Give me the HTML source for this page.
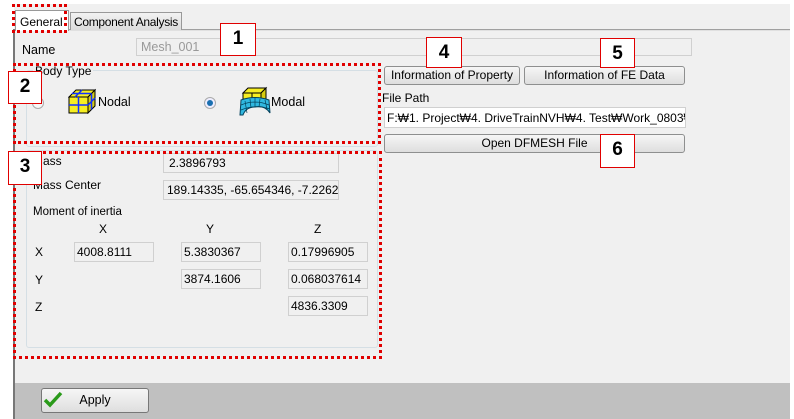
<!DOCTYPE html>
<html><head><meta charset="utf-8"><style>
*{margin:0;padding:0;box-sizing:border-box}
body{width:794px;height:419px;position:relative;overflow:hidden;background:#fff;font-family:"Liberation Sans",sans-serif;font-size:11.5px;color:#000}
.a{position:absolute}
.tb{position:absolute;border:1px solid #d0d0d0;background:#f0f0f0;padding:2px 5px;font-size:11.5px;white-space:nowrap;overflow:hidden}
.btn{position:absolute;border:1px solid #8e8f8f;border-radius:3px;background:linear-gradient(#f6f6f6,#dedede);text-align:center;font-size:12px;line-height:16px;white-space:nowrap}
.rd{position:absolute;border:3px dotted #e00000}
.num{position:absolute;background:#fff;border:1px solid #e00000;font-size:19px;font-weight:bold;text-align:center;line-height:30px}
.gb{position:absolute;border:1px solid #d5dfe5;border-radius:3px}
</style></head><body>
<div class="a" style="left:14px;top:4px;width:776px;height:415px;background:#f0f0f0"></div>
<div class="a" style="left:13px;top:29px;width:2px;height:390px;background:#777"></div>
<div class="a" style="left:15px;top:29px;width:775px;height:1px;background:#a0a0a0"></div>
<div class="a" style="left:15px;top:30px;width:775px;height:1px;background:#e0e0e0"></div>
<!-- tabs -->
<div class="a" style="left:15px;top:10px;width:54px;height:21px;background:#fff;border:1px solid #999;border-bottom:none;font-size:12px;padding:4px 4px">General</div>
<div class="a" style="left:70px;top:12px;width:112px;height:18px;background:linear-gradient(#f2f2f2,#dcdcdc);border:1px solid #999;border-bottom:none;font-size:12px;padding:2px 3px;letter-spacing:-0.3px">Component Analysis</div>
<div class="rd" style="left:12px;top:4px;width:55px;height:29px"></div>
<!-- name -->
<div class="a" style="left:22px;top:43px;font-size:12.5px">Name</div>
<div class="tb" style="left:136px;top:38px;width:556px;height:18px;color:#999;font-size:12.5px;padding:1px 4px">Mesh_001</div>
<div class="num" style="left:220px;top:23px;width:36px;height:33px">1</div>
<!-- body type -->
<div class="gb" style="left:26px;top:70px;width:352px;height:77px"></div>
<div class="a" style="left:33px;top:64px;background:#f0f0f0;padding:0 2px;font-size:12px">Body Type</div>
<div class="a" style="left:32px;top:97px;width:12px;height:12px;border-radius:50%;border:1px solid #aaa;background:#f7f7f7"></div>
<svg class="a" style="left:68px;top:88px" width="28" height="26" viewBox="0 0 28 26"><polygon points="1,9 8,2 27,2 20,9" fill="#f6ee22" stroke="#000"/><polygon points="20,9 27,2 27,18 20,25" fill="#d6cc10" stroke="#000"/><rect x="1" y="9" width="19" height="16" fill="#f6ee22" stroke="#000"/><path d="M10.5 9v16M1 17h19M4 5.5h19M14 2l-7 7M23.5 5.5v16M20 17l7-7" stroke="#1030ff" stroke-width="1.5"/></svg>
<div class="a" style="left:98px;top:95px;font-size:12.5px">Nodal</div>
<div class="a" style="left:204px;top:97px;width:12px;height:12px;border-radius:50%;border:1px solid #aaa;background:#eef"></div>
<div class="a" style="left:207px;top:100px;width:6px;height:6px;border-radius:50%;background:#1a6fb0"></div>
<svg class="a" style="left:239px;top:86px" width="32" height="31" viewBox="0 0 32 31"><polygon points="4,7 9,2 27,2 22,7" fill="#f6ee22" stroke="#000"/><polygon points="22,7 27,2 27,14 22,19" fill="#d6cc10" stroke="#000"/><rect x="4" y="7" width="18" height="12" fill="#f6ee22" stroke="#000"/><path d="M13 7v12M4 13h18" stroke="#000"/><path d="M1 29 L2 14 Q16 9 30 14 L31 27 Q26 19 16 21 Q7 21 4 29Z" fill="#30b8e0" stroke="#03405a"/><path d="M6 15l2 12M11 13l1 9M16 12v9M21 13l-1 8M26 14l2 9M2 19q14-6 28 0M2 24q14-6 29-1" stroke="#03405a" stroke-width=".7" fill="none"/></svg>
<div class="a" style="left:271px;top:95px;font-size:12.5px">Modal</div>
<div class="rd" style="left:13px;top:63px;width:368px;height:81px"></div>
<div class="num" style="left:8px;top:71px;width:34px;height:33px">2</div>
<!-- right side -->
<div class="btn" style="left:384px;top:66px;width:136px;height:19px">Information of Property</div>
<div class="btn" style="left:524px;top:66px;width:161px;height:19px">Information of FE Data</div>
<div class="num" style="left:426px;top:37px;width:36px;height:31px">4</div>
<div class="num" style="left:600px;top:38px;width:35px;height:30px">5</div>
<div class="a" style="left:382px;top:91px;font-size:12px">File Path</div>
<div class="tb" style="left:384px;top:107px;width:302px;height:21px;background:#fff;padding:3px 2px;font-size:12px">F:₩1. Project₩4. DriveTrainNVH₩4. Test₩Work_0803₩M</div>
<div class="btn" style="left:384px;top:134px;width:301px;height:19px">Open DFMESH File</div>
<div class="num" style="left:600px;top:134px;width:35px;height:34px">6</div>
<!-- group 3 -->
<div class="gb" style="left:26px;top:150px;width:352px;height:198px"></div>
<div class="a" style="left:33px;top:154px;font-size:12px">Mass</div>
<div class="tb" style="left:163px;top:153px;width:176px;height:20px;font-size:12px">2.3896793</div>
<div class="a" style="left:33px;top:178px;font-size:12px">Mass Center</div>
<div class="tb" style="left:163px;top:180px;width:176px;height:20px;font-size:12px;padding:2px 3px">189.14335, -65.654346, -7.22623</div>
<div class="a" style="left:33px;top:206px">Moment of inertia</div>
<div class="a" style="left:99px;top:222px;font-size:12px">X</div>
<div class="a" style="left:206px;top:222px;font-size:12px">Y</div>
<div class="a" style="left:314px;top:222px;font-size:12px">Z</div>
<div class="a" style="left:35px;top:245px;font-size:12px">X</div>
<div class="a" style="left:35px;top:273px;font-size:12px">Y</div>
<div class="a" style="left:35px;top:300px;font-size:12px">Z</div>
<div class="tb" style="left:74px;top:242px;width:80px;height:20px;font-size:12px;padding:2px 2px">4008.8111</div>
<div class="tb" style="left:181px;top:242px;width:80px;height:20px;font-size:12px;padding:2px 2px">5.3830367</div>
<div class="tb" style="left:288px;top:242px;width:80px;height:20px;font-size:12px;padding:2px 2px">0.17996905</div>
<div class="tb" style="left:181px;top:269px;width:80px;height:20px;font-size:12px;padding:2px 2px">3874.1606</div>
<div class="tb" style="left:288px;top:269px;width:80px;height:20px;font-size:12px;padding:2px 2px">0.068037614</div>
<div class="tb" style="left:288px;top:296px;width:80px;height:20px;font-size:12px;padding:2px 2px">4836.3309</div>
<div class="rd" style="left:13px;top:151px;width:369px;height:208px"></div>
<div class="num" style="left:8px;top:151px;width:34px;height:34px">3</div>
<!-- bottom -->
<div class="a" style="left:15px;top:383px;width:775px;height:36px;background:#c0c0c0"></div>
<div class="btn" style="left:41px;top:388px;width:108px;height:25px;line-height:23px;font-size:12.5px;border-color:#777">Apply</div>
<svg class="a" style="left:43px;top:390px" width="20" height="18" viewBox="0 0 20 18"><path d="M2 10 L7 15 L18 3" stroke="#2a9a1a" stroke-width="3.5" fill="none"/></svg>
</body></html>
